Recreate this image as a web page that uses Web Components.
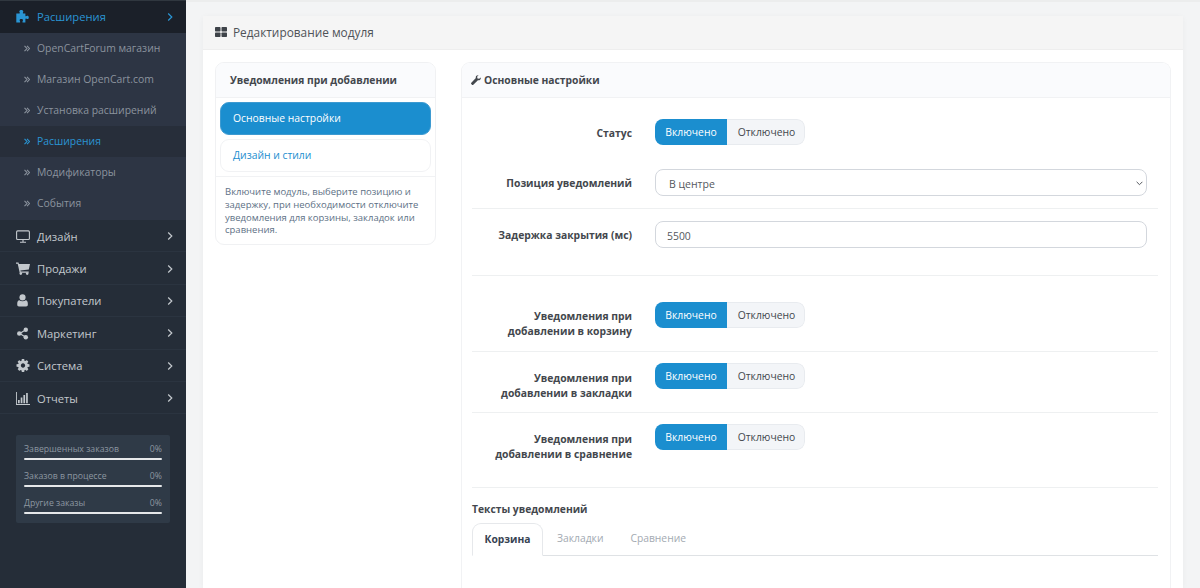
<!DOCTYPE html>
<html lang="ru">
<head>
<meta charset="utf-8">
<title>Редактирование модуля</title>
<style>
    html, body { margin: 0; height: 588px; overflow: hidden; }
    body { font-family: 'Open Sans', 'Liberation Sans', sans-serif; background: #f3f4f5; }
    admin-page { height: 588px; }
</style>
</head>
<body>
<admin-page>
    <side-bar slot="side">
        <menu-item icon="puzzle" state="open">Расширения</menu-item>
        <sub-menu>
            <sub-item>OpenCartForum магазин</sub-item>
            <sub-item>Магазин OpenCart.com</sub-item>
            <sub-item>Установка расширений</sub-item>
            <sub-item active>Расширения</sub-item>
            <sub-item>Модификаторы</sub-item>
            <sub-item>События</sub-item>
        </sub-menu>
        <menu-item icon="desktop">Дизайн</menu-item>
        <menu-item icon="cart">Продажи</menu-item>
        <menu-item icon="user">Покупатели</menu-item>
        <menu-item icon="share">Маркетинг</menu-item>
        <menu-item icon="cog">Система</menu-item>
        <menu-item icon="chart">Отчеты</menu-item>
        <order-stats>
            <stat-bar label="Завершенных заказов"></stat-bar>
            <stat-bar label="Заказов в процессе"></stat-bar>
            <stat-bar label="Другие заказы"></stat-bar>
        </order-stats>
    </side-bar>

    <edit-panel heading="Редактирование модуля">
        <module-nav heading="Уведомления при добавлении" slot="nav">
            <nav-link active>Основные настройки</nav-link>
            <nav-link>Дизайн и стили</nav-link>
            <span slot="hint">Включите модуль, выберите позицию и задержку, при необходимости отключите уведомления для корзины, закладок или сравнения.</span>
        </module-nav>

        <settings-card heading="Основные настройки">
            <form-row label="Статус" top="21" bottom="0" plain><on-off></on-off></form-row>
            <form-row label="Позиция уведомлений" top="23" bottom="12"><select-box>В центре</select-box></form-row>
            <form-row label="Задержка закрытия (мс)" top="12" bottom="27"><text-box value="5500"></text-box></form-row>
            <form-row label="Уведомления при<br>добавлении в корзину" top="26" bottom="12" two="7"><on-off></on-off></form-row>
            <form-row label="Уведомления при<br>добавлении в закладки" top="11" bottom="11" two="8"><on-off></on-off></form-row>
            <form-row label="Уведомления при<br>добавлении в сравнение" top="11" bottom="25" two="8"><on-off></on-off></form-row>
            <tab-strip heading="Тексты уведомлений">
                <tab-item active>Корзина</tab-item>
                <tab-item>Закладки</tab-item>
                <tab-item>Сравнение</tab-item>
            </tab-strip>
        </settings-card>
    </edit-panel>
</admin-page>

<script>
const ICONS = {
    puzzle: '<svg viewBox="0 0 14 13" fill="currentColor"><path d="M5.300 0c1.200 0 2 .7 2 1.500 0 .7-.5 1-.5 1.500 0 .3.200.4.600.4h2v2.300c0 .4.200.6.500.6.500 0 .8-.5 1.400-.5.900 0 1.500.7 1.500 1.600s-.6 1.700-1.500 1.700c-.6 0-.9-.5-1.400-.5-.3 0-.5.200-.5.600V12.500H6.500v-1c0-.5.500-.8.500-1.300 0-.7-.7-1.100-1.700-1.100s-1.700.4-1.700 1.100c0 .5.500.8.500 1.300v1H.300V3.400h3c.4 0 .6-.1.600-.4 0-.5-.6-.8-.6-1.500C3.300.7 4.100 0 5.300 0z"/></svg>',
    desktop: '<svg viewBox="0 0 14 13" fill="none" stroke="currentColor"><rect x=".6" y=".9" width="12.800" height="8.600" rx="1" stroke-width="1.100"/><path d="M7 9.800v2M4 12.200h6" stroke-width="1.100"/></svg>',
    cart: '<svg viewBox="0 0 14 13" fill="currentColor"><path d="M0 .6h2.500l.4 1.400H14l-1.200 5.600-8.400.9.300 1.100h8v1.100H3.700L1.700 1.700H0z"/><circle cx="4.800" cy="11.600" r="1.300"/><circle cx="11.200" cy="11.600" r="1.300"/></svg>',
    user: '<svg viewBox="0 0 14 14" fill="currentColor"><circle cx="6.500" cy="3.700" r="3.300"/><path d="M3.100 6.600c.9.8 2 1.200 3.400 1.200s2.500-.4 3.400-1.200c1.500.2 2.300 1.500 2.300 3.600v1.400c0 1-.8 1.800-1.800 1.800H2.600c-1 0-1.800-.8-1.800-1.800v-1.400c0-2.100.8-3.400 2.300-3.600z"/></svg>',
    share: '<svg viewBox="0 0 14 14" fill="currentColor" stroke="currentColor"><path d="M10 3 3.500 7l6.500 4" fill="none" stroke-width="1.300"/><g stroke="none"><circle cx="10" cy="3" r="2.400"/><circle cx="3" cy="7" r="2.400"/><circle cx="10" cy="11" r="2.400"/></g></svg>',
    cog: '<svg viewBox="0 -128 1536 1536" fill="currentColor"><path d="M1024 640q0-106-75-181t-181-75-181 75-75 181 75 181 181 75 181-75 75-181zm512-109v222q0 12-8 23t-20 13l-185 28q-19 54-39 91 35 50 107 138 10 12 10 25t-9 23q-27 37-99 108t-94 71q-12 0-26-9l-138-108q-44 23-91 38-16 136-29 186-7 28-36 28h-222q-14 0-24.500-8.500t-11.500-21.500l-28-184q-49-16-90-37l-141 107q-10 9-25 9-14 0-25-11-126-114-165-168-7-10-7-23 0-12 8-23 15-21 51-66.500t54-70.500q-27-50-41-99l-183-27q-13-2-21-12.500t-8-23.500v-222q0-12 8-23t19-13l186-28q14-46 39-92-40-57-107-138-10-12-10-24 0-10 9-23 26-36 98.500-107.500t94.500-71.500q13 0 26 10l138 107q44-23 91-38 16-136 29-186 7-28 36-28h222q14 0 24.500 8.500t11.500 21.500l28 184q49 16 90 37l142-107q9-9 24-9 13 0 25 10 129 119 165 170 7 8 7 22 0 12-8 23-15 21-51 66.500t-54 70.500q26 50 41 98l183 28q13 2 21 12.500t8 23.500z"/></svg>',
    chart: '<svg viewBox="0 0 14 13" fill="currentColor"><path d="M0 0h.9v12h13.100v1H0z"/><path d="M2 8h1.700v3.200H2zM4.700 5.500h1.700v5.700H4.700zM7.400 3h1.700v8.200H7.400zM10.100 1h1.700v10.200h-1.700z"/></svg>',
    wrench: '<svg viewBox="0 0 12 12" fill="currentColor"><path d="M11.700 2.900c.3.900.1 2-.7 2.700-.8.700-1.800.9-2.700.6l-5.500 5.400c-.5.500-1.200.5-1.700 0l-.7-.7c-.5-.5-.5-1.200 0-1.700l5.400-5.500C5.500 2.800 5.700 1.700 6.500 1 7.200.3 8.200.1 9.100.3L7.300 2.100l.5 2 2 .5z"/></svg>',
    grid: '<svg viewBox="0 0 12 10" fill="currentColor"><rect x="0" y="0" width="5.500" height="4.400" rx=".7"/><rect x="6.500" y="0" width="5.500" height="4.400" rx=".7"/><rect x="0" y="5.600" width="5.500" height="4.400" rx=".7"/><rect x="6.500" y="5.600" width="5.500" height="4.400" rx=".7"/></svg>'
};

// base for all the small elements: markup + styles go in one template string
class Base extends HTMLElement {
    constructor() {
        super();
        this.attachShadow({ mode: 'open' });
    }
    connectedCallback() {
        this.shadowRoot.innerHTML = this.view();
    }
}

class AdminPage extends Base {
    view() {
        return `
            <style>
                :host { display: grid; grid-template-columns: 186px 1fr; background: #f3f4f5; overflow: hidden; }
                main { padding: 14px 17px 0; border-top: 2px solid #eceded; box-sizing: border-box; min-width: 0; }
            </style>
            <slot name="side"></slot>
            <main><slot></slot></main>
        `;
    }
}

class SideBar extends Base {
    view() {
        return `
            <style>
                :host { display: block; height: 588px; background: #252d38; border-top: 1px solid #30373f; box-sizing: border-box; overflow: hidden; }
            </style>
            <slot></slot>
        `;
    }
}

class MenuItem extends Base {
    view() {
        const open = this.getAttribute('state') === 'open';
        return `
            <style>
                :host { display: block; }
                div {
                    display: flex; align-items: center; box-sizing: border-box;
                    height: ${open ? 32 : 32.4}px; padding: ${open ? '0 13px 1px 16px' : '1px 13px 0 16px'};
                    font-size: 11.200px; color: ${open ? '#2a95d4' : '#c3c8cd'};
                    background: ${open ? '#1b2029' : 'transparent'};
                    border-bottom: ${open ? 'none' : '1px solid #2b3440'};
                }
                i { width: 21px; display: flex; align-items: center; }
                i svg { height: 13px; width: 14px; display: block; }
                span { flex: 1; }
                .more { width: 6px; height: 10px; }
            </style>
            <div>
                <i>${ICONS[this.getAttribute('icon')]}</i>
                <span><slot></slot></span>
                <svg class="more" viewBox="0 0 6 10" fill="none" stroke="currentColor" stroke-width="1.200"><path d="M1.200 1.500 4.800 5 1.200 8.500"/></svg>
            </div>
        `;
    }
}

class SubMenu extends Base {
    view() {
        return `
            <style>
                :host { display: block; background: #2d3544; padding-bottom: 1px; }
            </style>
            <slot></slot>
        `;
    }
}

class SubItem extends Base {
    view() {
        const active = this.hasAttribute('active');
        return `
            <style>
                :host { display: block; }
                div {
                    display: flex; align-items: center; height: 31px; box-sizing: border-box; padding: 0 0 1px 24px;
                    font-size: 10.400px; color: ${active ? '#2a95d4' : '#8b939e'};
                    background: ${active ? '#272e3a' : 'transparent'};
                }
                svg { width: 6px; height: 7px; margin-right: 7px; flex: none; }
            </style>
            <div>
                <svg viewBox="0 0 6 7" fill="none" stroke="currentColor" stroke-width="1.100"><path d="M.5 .8 3 3.500.5 6.200M3 .8 5.500 3.500 3 6.200"/></svg>
                <slot></slot>
            </div>
        `;
    }
}

class OrderStats extends Base {
    view() {
        return `
            <style>
                :host {
                    display: block; margin: 21px 16px 0; padding: 8px 8px 7px;
                    background: #2f3a47; border-radius: 2px; box-sizing: border-box; height: 88px;
                }
            </style>
            <slot></slot>
        `;
    }
}

class StatBar extends Base {
    view() {
        return `
            <style>
                :host { display: block; height: 27px; font-size: 8.700px; color: #8d97a1; }
                p { display: flex; justify-content: space-between; margin: 0; height: 13px; line-height: 13px; }
                b { display: block; height: 2.500px; margin-top: 1.500px; background: #e6e8ea; border-radius: 1px; font-weight: normal; }
            </style>
            <p><span>${this.getAttribute('label')}</span><span>0%</span></p>
            <b></b>
        `;
    }
}

class EditPanel extends Base {
    view() {
        return `
            <style>
                :host { display: block; background: #fff; box-shadow: 0 1px 6px rgba(0,0,0,.04); }
                header {
                    display: flex; align-items: center; height: 34px; padding: 0 12px 1px; box-sizing: border-box;
                    background: #f5f5f5; border-bottom: 1px solid #eeeeee;
                    font-size: 11.850px; color: #4f5358;
                }
                header svg { width: 12px; height: 10px; margin-right: 6px; color: #3e4349; }
                section { display: grid; grid-template-columns: 221px 1fr; gap: 25px; padding: 12px 12px 0; height: 538px; box-sizing: border-box; align-items: start; }
            </style>
            <header>${ICONS.grid}<span>${this.getAttribute('heading')}</span></header>
            <section>
                <slot name="nav"></slot>
                <slot></slot>
            </section>
        `;
    }
}

class ModuleNav extends Base {
    view() {
        return `
            <style>
                :host { display: block; border: 1px solid #f0f1f3; border-radius: 9px; overflow: hidden; box-sizing: border-box; }
                h3 { margin: 0; height: 34px; line-height: 34px; padding-left: 14px; font-size: 10.300px; font-weight: 700; color: #43474d; background: #fafbfd; border-bottom: 1px solid #f1f2f4; }
                nav { display: flex; flex-direction: column; gap: 4px; padding: 4px; border-bottom: 1px solid #f1f2f4; }
                p { margin: 0; padding: 9px 9px 7px; font-size: 9.500px; line-height: 12.800px; color: #5d7085; }
            </style>
            <h3>${this.getAttribute('heading')}</h3>
            <nav><slot></slot></nav>
            <p><slot name="hint"></slot></p>
        `;
    }
}

class NavLink extends Base {
    view() {
        const active = this.hasAttribute('active');
        return `
            <style>
                :host { display: block; }
                a {
                    display: block; height: 33px; line-height: 31px; box-sizing: border-box; padding-left: 12px;
                    border-radius: 9px; font-size: 10.350px;
                    border: 1px solid ${active ? '#3d9ad1' : '#f1f2f4'};
                    background: ${active ? '#1b8ecf' : '#fff'};
                    color: ${active ? '#fff' : '#1b8ecf'};
                }
            </style>
            <a><slot></slot></a>
        `;
    }
}

class SettingsCard extends Base {
    view() {
        return `
            <style>
                :host { display: block; border: 1px solid #f1f2f4; border-bottom: none; border-radius: 9px 9px 0 0; height: 526px; overflow: hidden; box-sizing: border-box; }
                h3 {
                    display: flex; align-items: center; gap: 3px; margin: 0; height: 35px; padding-left: 9px; box-sizing: border-box;
                    font-size: 10.300px; font-weight: 700; color: #43474d; background: #fafbfd; border-bottom: 1px solid #f1f2f4;
                }
                h3 svg { width: 10px; height: 10px; }
                div { padding: 0 12px 0 10px; }
            </style>
            <h3>${ICONS.wrench}<span>${this.getAttribute('heading')}</span></h3>
            <div><slot></slot></div>
        `;
    }
}

class FormRow extends Base {
    view() {
        const top = this.getAttribute('top');
        const bottom = this.getAttribute('bottom');
        const two = this.getAttribute('two');
        return `
            <style>
                :host {
                    display: grid; grid-template-columns: 160px 492px; column-gap: 23px; align-items: start;
                    padding: ${top}px 0 ${bottom}px;
                    border-bottom: ${this.hasAttribute('plain') ? 'none' : '1px solid #eef0f1'};
                }
                label {
                    display: block; text-align: right; font-size: 10.350px; font-weight: 700; color: #43474d;
                    box-sizing: border-box; ${two ? '' : 'height: 27px;'}
                    line-height: ${two ? '15px' : '27px'}; padding-top: ${two || 1}px;
                }
            </style>
            <label>${this.getAttribute('label')}</label>
            <slot></slot>
        `;
    }
}

class OnOff extends Base {
    view() {
        return `
            <style>
                :host { display: inline-flex; height: 26px; font-size: 10.350px; border-radius: 8px; overflow: hidden; width: 150px; box-sizing: border-box; }
                span { display: flex; align-items: center; justify-content: center; box-sizing: border-box; }
                .on { width: 72px; background: #1b8ecf; color: #fff; }
                .off { flex: 1; padding-left: 2px; background: #f3f5f8; color: #43474d; border: 1px solid #e8ebef; border-left: none; border-radius: 0 8px 8px 0; }
            </style>
            <span class="on">Включено</span><span class="off">Отключено</span>
        `;
    }
}

class SelectBox extends Base {
    view() {
        return `
            <style>
                :host { display: flex; align-items: center; justify-content: space-between; height: 27px; box-sizing: border-box; padding: 2px 3px 0 13px; border: 1px solid #d3d7dd; border-radius: 8px; font-size: 10.500px; color: #54585e; background: #fff; }
                svg { width: 7px; height: 5px; color: #55595f; }
            </style>
            <slot></slot>
            <svg viewBox="0 0 7 5" fill="none" stroke="currentColor" stroke-width="1"><path d="M.6 .8 3.500 3.700 6.400 .8"/></svg>
        `;
    }
}

class TextBox extends Base {
    view() {
        return `
            <style>
                :host { display: flex; align-items: center; height: 27px; box-sizing: border-box; padding: 2px 11px 0; border: 1px solid #d3d7dd; border-radius: 8px; font-size: 10.400px; color: #54585e; background: #fff; }
            </style>
            ${this.getAttribute('value')}
        `;
    }
}

class TabStrip extends Base {
    view() {
        return `
            <style>
                :host { display: block; }
                h4 { margin: 0; padding-top: 14px; height: 21px; line-height: 15px; font-size: 10.300px; font-weight: 700; color: #43474d; }
                div { display: flex; height: 33px; box-sizing: border-box; border-bottom: 1px solid #dfe2e5; }
            </style>
            <h4>${this.getAttribute('heading')}</h4>
            <div><slot></slot></div>
        `;
    }
}

class TabItem extends Base {
    view() {
        const active = this.hasAttribute('active');
        return `
            <style>
                :host { display: block; }
                a {
                    display: block; box-sizing: border-box; height: 33px; line-height: 31px; padding: 0 ${active ? '11.5px' : '13px 0 14px'};
                    font-size: 10.300px; border-radius: 9px 9px 0 0;
                    font-weight: ${active ? 700 : 400};
                    color: ${active ? '#374252' : '#a3aab2'};
                    ${active ? 'border: 1px solid #e6e8eb; border-bottom: 1px solid #fff; background: #fff;' : ''}
                }
            </style>
            <a><slot></slot></a>
        `;
    }
}

const tags = {
    'admin-page': AdminPage, 'side-bar': SideBar, 'menu-item': MenuItem, 'sub-menu': SubMenu,
    'sub-item': SubItem, 'order-stats': OrderStats, 'stat-bar': StatBar, 'edit-panel': EditPanel,
    'module-nav': ModuleNav, 'nav-link': NavLink, 'settings-card': SettingsCard, 'form-row': FormRow,
    'on-off': OnOff, 'select-box': SelectBox, 'text-box': TextBox, 'tab-strip': TabStrip, 'tab-item': TabItem
};
for (const name in tags) customElements.define(name, tags[name]);
</script>
</body>
</html>
